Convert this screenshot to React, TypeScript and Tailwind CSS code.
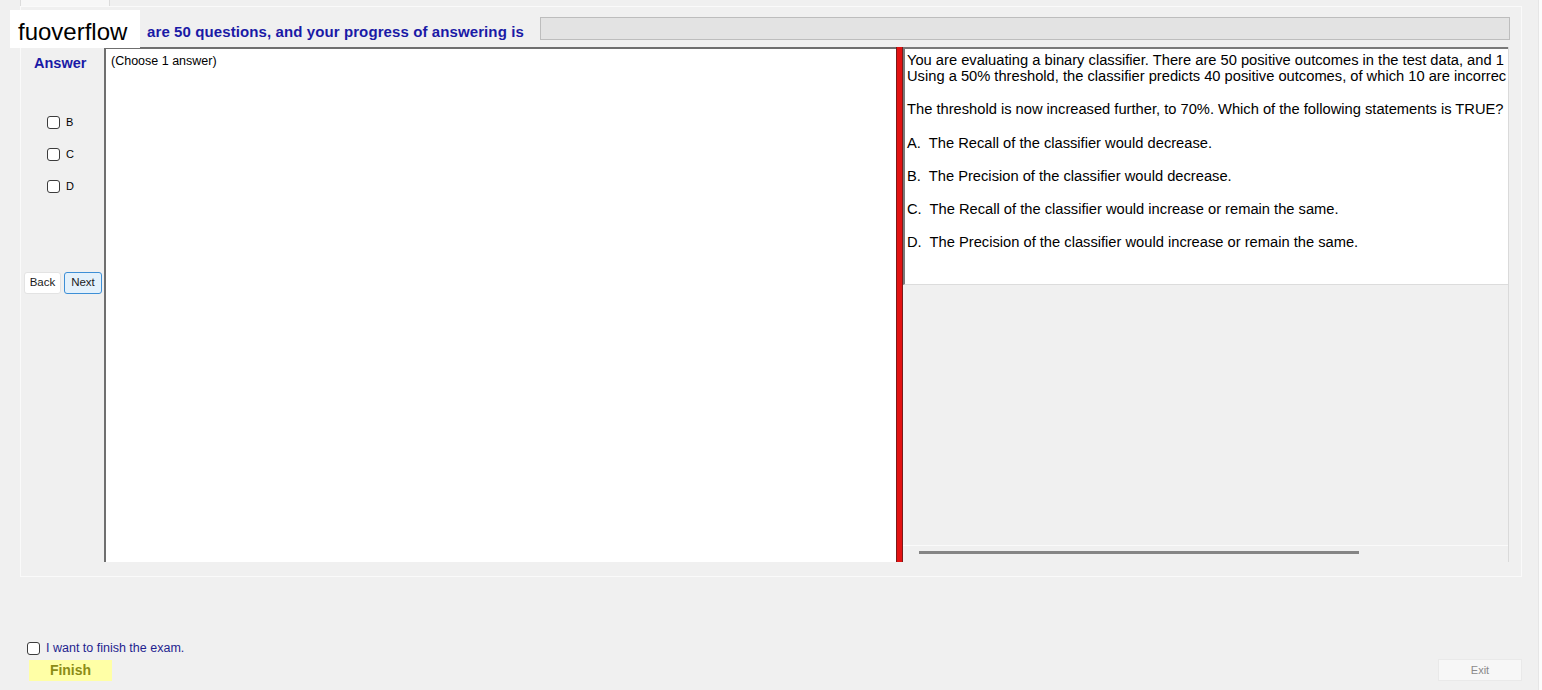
import React from "react";

const options = ["B", "C", "D"];

const statements = [
  "A.  The Recall of the classifier would decrease.",
  "B.  The Precision of the classifier would decrease.",
  "C.  The Recall of the classifier would increase or remain the same.",
  "D.  The Precision of the classifier would increase or remain the same.",
];

function Box() {
  return (
    <span className="inline-block w-[13px] h-[13px] rounded-[3px] border border-[#3c3c3c] bg-white shrink-0" />
  );
}

export default function App() {
  return (
    <div className="relative w-[1542px] h-[690px] bg-[#f0f0f0] flex overflow-hidden font-['Liberation_Sans',Arial,sans-serif] text-black">
      <div className="flex-1 flex flex-col">
        {/* tab stub */}
        <div className="h-[6px] pl-[20px] flex">
          <div className="w-[90px] h-full bg-[#f7f7f7] border-x border-[#dcdcdc]" />
        </div>

        {/* main panel */}
        <div className="ml-[20px] mr-[16px] h-[571px] border border-[#fafafa] flex flex-col">
          {/* header */}
          <div className="h-[40px] flex items-start">
            <div className="w-[126px] shrink-0" />
            <p className="mt-[16px] text-[15px] leading-[18px] font-bold text-[#1a1aa6] whitespace-nowrap tracking-[0.1px]">
              are 50 questions, and your progress of answering is
            </p>
            <div className="ml-[16px] mr-[11px] mt-[10px] flex-1 h-[23px] bg-[#e3e3e3] border border-[#bdbdbd]" />
          </div>

          {/* body */}
          <div className="h-[515px] flex">
            {/* answer column */}
            <div className="w-[83px] flex flex-col">
              <p className="mt-[8px] ml-[13px] text-[14.5px] leading-[16px] font-bold text-[#1a1aa6]">Answer</p>
              <div className="mt-[45px] ml-[26px] flex flex-col gap-[19px]">
                {options.map((o) => (
                  <div key={o} className="flex items-center gap-[6px] h-[13px]">
                    <Box />
                    <span className="text-[11px] leading-[13px]">{o}</span>
                  </div>
                ))}
              </div>
              <div className="mt-[79px] ml-[3px] flex gap-[3px]">
                <button className="w-[37px] h-[22px] bg-white border border-[#e3e3e3] rounded-[3px] text-[11.5px] text-[#1b1b1b]">
                  Back
                </button>
                <button className="w-[38px] h-[22px] bg-[#e4f1fb] border border-[#3d8fd6] rounded-[3px] text-[11.5px] text-[#1b1b1b]">
                  Next
                </button>
              </div>
            </div>

            {/* answer area */}
            <div className="w-[792px] bg-white border-t-2 border-l-2 border-[#6f6f6f] pl-[5px] pt-[5px]">
              <p className="text-[12.5px] leading-[14px]">(Choose 1 answer)</p>
            </div>

            {/* splitter */}
            <div className="w-[7px] bg-[#e31212] border-x border-[#7a1a1a]" />

            {/* question area */}
            <div className="w-[606px] flex flex-col border-r border-[#dadada]">
              <div className="h-[238px] bg-white border-t-2 border-l-2 border-[#7a7a7a] border-b border-b-[#dcdcdc] pl-[2px] pt-[3px] overflow-hidden whitespace-nowrap text-[14.7px] leading-[16px]">
                <p>You are evaluating a binary classifier. There are 50 positive outcomes in the test data, and 1</p>
                <p className="mb-[17px]">Using a 50% threshold, the classifier predicts 40 positive outcomes, of which 10 are incorrec</p>
                <p className="mb-[18px]">The threshold is now increased further, to 70%. Which of the following statements is TRUE?</p>
                {statements.map((s) => (
                  <p key={s} className="mb-[17px] whitespace-pre">{s}</p>
                ))}
              </div>
              <div className="flex-1" />
              <div className="h-[17px] border-t border-[#fafafa] pl-[16px] pt-[5px]">
                <div className="w-[440px] h-[3px] bg-[#858585]" />
              </div>
            </div>
          </div>
        </div>

        {/* footer */}
        <div className="flex-1 flex items-end justify-between pl-[27px] pr-[16px] pb-[9px]">
          <div className="flex flex-col">
            <label className="flex items-center gap-[6px]">
              <Box />
              <span className="text-[12.5px] leading-[16px] text-[#1f1f8f]">I want to finish the exam.</span>
            </label>
            <button className="mt-[4px] ml-[2px] w-[83px] h-[21px] bg-[#ffffa6] text-[14px] font-bold text-[#8c8c16]">
              Finish
            </button>
          </div>
          <button className="w-[84px] h-[22px] bg-[#f7f7f7] border border-[#e9e9e9] text-[11px] text-[#8a8a8a]">
            Exit
          </button>
        </div>
      </div>

      {/* right edge strip */}
      <div className="w-[4px] bg-[#fcfcfc] border-l border-[#e6e6e6]" />

      {/* watermark logo */}
      <div className="absolute left-[10px] top-[10px] w-[130px] h-[38px] bg-white flex items-start pt-[8px] pl-[8px]">
        <span className="text-[24px] leading-[28px] text-black">fuoverflow</span>
      </div>
    </div>
  );
}
